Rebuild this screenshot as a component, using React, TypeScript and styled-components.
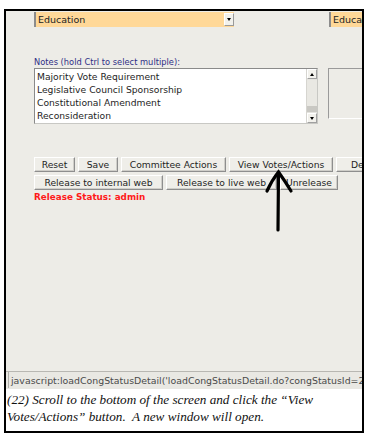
import styled, { createGlobalStyle } from 'styled-components';

const GlobalStyle = createGlobalStyle`
  html, body {
    margin: 0;
    padding: 0;
    background: #ffffff;
  }
`;

const Page = styled.div`
  position: relative;
  width: 367px;
  height: 438px;
  overflow: hidden;
  background: #ffffff;
`;

const Frame = styled.div`
  margin: 9px 0 0 4px;
  width: 356px;
  height: 420px;
  border: 2px solid #000000;
  display: flex;
  flex-direction: column;
`;

const Screen = styled.div`
  height: 360px;
  background: #edece7;
  overflow: hidden;
  padding: 1px 0 0 28px;
  box-sizing: border-box;
  font-family: 'DejaVu Sans', sans-serif;
  color: #222222;
`;

const Row = styled.div<{ $gap?: number; $top?: number }>`
  display: flex;
  align-items: flex-start;
  gap: ${(p) => p.$gap ?? 0}px;
  margin-top: ${(p) => p.$top ?? 0}px;
  white-space: nowrap;
`;

const Select = styled.div<{ $w: number; $ml?: number }>`
  display: flex;
  width: ${(p) => p.$w}px;
  flex: none;
  height: 15px;
  margin-left: ${(p) => p.$ml ?? 0}px;
  background: #ffd898;
  border-left: 2px solid #8c8c8c;
  box-sizing: border-box;
  font-size: 9.5px;
  line-height: 15px;
  overflow: hidden;
`;

const SelectText = styled.span`
  flex: 1;
  padding-left: 2px;
`;

const DropButton = styled.div`
  width: 10px;
  height: 13px;
  margin-top: 1px;
  background: #f2f1ec;
  border: 1px solid #9a9a9a;
  border-top-color: #ffffff;
  border-left-color: #ffffff;
  box-sizing: border-box;
  display: flex;
  align-items: center;
  justify-content: center;
  &::after {
    content: '';
    border-left: 2.5px solid transparent;
    border-right: 2.5px solid transparent;
    border-top: 3px solid #000;
  }
`;

const NotesLabel = styled.div`
  margin-top: 30px;
  font-size: 8.3px;
  line-height: 11px;
  color: #2f2f86;
`;

const ListBox = styled.div`
  display: flex;
  width: 284px;
  height: 56px;
  flex: none;
  background: #ffffff;
  border: 1px solid #c8c8c4;
  border-top-color: #8a8a8a;
  border-left-color: #8a8a8a;
  box-sizing: border-box;
`;

const ListItems = styled.div`
  flex: 1;
  padding: 1px 0 0 2px;
  font-size: 9.2px;
  line-height: 13px;
  color: #1e1e1e;
`;

const ScrollBar = styled.div`
  width: 10px;
  display: flex;
  flex-direction: column;
  background: #e4e3de;
  border-left: 1px solid #d6d5d0;
`;

const ScrollArrow = styled.div<{ $up?: boolean }>`
  height: 10px;
  background: #f2f1ec;
  border: 1px solid #a0a0a0;
  border-top-color: #ffffff;
  border-left-color: #ffffff;
  box-sizing: border-box;
  display: flex;
  align-items: center;
  justify-content: center;
  &::after {
    content: '';
    border-left: 2.5px solid transparent;
    border-right: 2.5px solid transparent;
    ${(p) => (p.$up ? 'border-bottom: 3px solid #000;' : 'border-top: 3px solid #000;')}
  }
`;

const ScrollThumb = styled.div`
  flex: 1;
  margin: 1px 0;
  background-color: #e9e8e3;
  background-image: radial-gradient(#bdbcb7 0.6px, transparent 0.7px);
  background-size: 2px 2px;
  border-bottom: 6px solid #c9c8c3;
`;

const SideBox = styled.div`
  width: 60px;
  height: 51px;
  flex: none;
  margin-left: 10px;
  background: #edece7;
  border: 1px solid #ffffff;
  border-top-color: #9a9a9a;
  border-left-color: #9a9a9a;
  box-sizing: border-box;
`;

const Button = styled.div<{ $w: number }>`
  width: ${(p) => p.$w}px;
  flex: none;
  height: 15px;
  box-sizing: border-box;
  background: #efeee9;
  border: 1px solid #8e8e8e;
  border-top-color: #ffffff;
  border-left-color: #ffffff;
  box-shadow: inset -1px -1px 0 #cfcec9;
  font-size: 9.2px;
  line-height: 13px;
  text-align: center;
  color: #1e1e1e;
  overflow: hidden;
`;

const ReleaseStatus = styled.div`
  margin-top: 2px;
  font-size: 8.8px;
  font-weight: bold;
  line-height: 11px;
  color: #ff1a1a;
`;

const StatusBar = styled.div`
  height: 18px;
  background: #e9e8e3;
  border-top: 1px solid #b8b7b2;
  box-sizing: border-box;
  padding: 0 0 0 2px;
  overflow: hidden;
`;

const StatusText = styled.div`
  height: 16px;
  border-left: 1px solid #b0afaa;
  padding-left: 2px;
  font-family: 'DejaVu Sans', sans-serif;
  font-size: 9.4px;
  line-height: 17px;
  color: #4a4a4a;
  white-space: nowrap;
`;

const Caption = styled.div`
  flex: 1;
  padding: 2px 0 0 1px;
  font-family: 'Liberation Serif', serif;
  font-style: italic;
  font-size: 13.2px;
  line-height: 17px;
  color: #111111;
  white-space: nowrap;
`;

const Arrow = styled.svg`
  position: absolute;
  left: 0;
  top: 0;
  pointer-events: none;
`;

const notes = [
  'Majority Vote Requirement',
  'Legislative Council Sponsorship',
  'Constitutional Amendment',
  'Reconsideration',
];

export default function App() {
  return (
    <Page>
      <GlobalStyle />
      <Frame>
        <Screen>
          <Row>
            <Select $w={200}>
              <SelectText>Education</SelectText>
              <DropButton />
            </Select>
            <Select $w={80} $ml={95}>
              <SelectText>Education</SelectText>
            </Select>
          </Row>
          <NotesLabel>Notes (hold Ctrl to select multiple):</NotesLabel>
          <Row>
            <ListBox>
              <ListItems>
                {notes.map((n) => (
                  <div key={n}>{n}</div>
                ))}
              </ListItems>
              <ScrollBar>
                <ScrollArrow $up />
                <ScrollThumb />
                <ScrollArrow />
              </ScrollBar>
            </ListBox>
            <SideBox />
          </Row>
          <Row $gap={3} $top={33}>
            <Button $w={41}>Reset</Button>
            <Button $w={40}>Save</Button>
            <Button $w={105}>Committee Actions</Button>
            <Button $w={104}>View Votes/Actions</Button>
            <Button $w={60}>Delete</Button>
          </Row>
          <Row $gap={3} $top={3}>
            <Button $w={129}>Release to internal web</Button>
            <Button $w={111}>Release to live web</Button>
            <Button $w={58}>Unrelease</Button>
          </Row>
          <ReleaseStatus>Release Status: admin</ReleaseStatus>
        </Screen>
        <StatusBar>
          <StatusText>
            javascript:loadCongStatusDetail('loadCongStatusDetail.do?congStatusId=2
          </StatusText>
        </StatusBar>
        <Caption>
          (22) Scroll to the bottom of the screen and click the “View
          <br />
          Votes/Actions” button.&nbsp; A new window will open.
        </Caption>
      </Frame>
      <Arrow width="367" height="438" viewBox="0 0 367 438">
        <g stroke="#000" strokeWidth="3.2" strokeLinecap="round" fill="none">
          <path d="M278 230 L278.5 172" />
          <path d="M267 191 Q272 180 278.5 172 Q285 181 291 191" />
        </g>
      </Arrow>
    </Page>
  );
}
